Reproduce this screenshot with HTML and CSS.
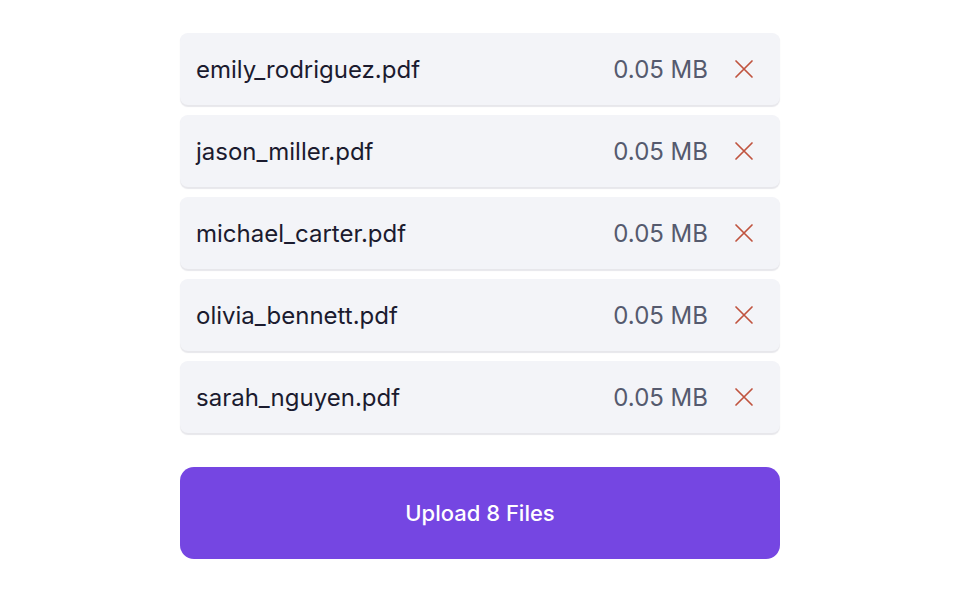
FILE: index.html
```html
<!DOCTYPE html>
<html>
<head>
<meta charset="utf-8">
<link rel="stylesheet" href="styles.css">
</head>
<body>
<main class="uploader">
  <ul class="file-list">
    <li class="file-row"><span class="file-name">emily_rodriguez.pdf</span><span class="file-size">0.05 MB</span><button class="remove" aria-label="Remove"><svg viewBox="0 0 20 20" width="20" height="20"><path d="M2 2L18 18M18 2L2 18" stroke="currentColor" stroke-width="1.7" stroke-linecap="round"/></svg></button></li>
    <li class="file-row"><span class="file-name">jason_miller.pdf</span><span class="file-size">0.05 MB</span><button class="remove" aria-label="Remove"><svg viewBox="0 0 20 20" width="20" height="20"><path d="M2 2L18 18M18 2L2 18" stroke="currentColor" stroke-width="1.7" stroke-linecap="round"/></svg></button></li>
    <li class="file-row"><span class="file-name">michael_carter.pdf</span><span class="file-size">0.05 MB</span><button class="remove" aria-label="Remove"><svg viewBox="0 0 20 20" width="20" height="20"><path d="M2 2L18 18M18 2L2 18" stroke="currentColor" stroke-width="1.7" stroke-linecap="round"/></svg></button></li>
    <li class="file-row"><span class="file-name">olivia_bennett.pdf</span><span class="file-size">0.05 MB</span><button class="remove" aria-label="Remove"><svg viewBox="0 0 20 20" width="20" height="20"><path d="M2 2L18 18M18 2L2 18" stroke="currentColor" stroke-width="1.7" stroke-linecap="round"/></svg></button></li>
    <li class="file-row"><span class="file-name">sarah_nguyen.pdf</span><span class="file-size">0.05 MB</span><button class="remove" aria-label="Remove"><svg viewBox="0 0 20 20" width="20" height="20"><path d="M2 2L18 18M18 2L2 18" stroke="currentColor" stroke-width="1.7" stroke-linecap="round"/></svg></button></li>
  </ul>
  <button class="upload-btn">Upload 8 Files</button>
</main>
</body>
</html>
```
FILE: styles.css
```css
* { box-sizing: border-box; }
html, body { margin: 0; padding: 0; background: #ffffff; }
body {
  font-family: Inter, "Noto Sans", sans-serif;
  color: #1b1b2f;
}
.uploader {
  width: 600px;
  margin: 0 auto;
  padding-top: 33px;
  display: flex;
  flex-direction: column;
}
.file-list {
  list-style: none;
  margin: 0;
  padding: 0;
  display: flex;
  flex-direction: column;
  gap: 10px;
}
.file-row {
  height: 72px;
  display: flex;
  align-items: center;
  padding: 0 26px 0 16px;
  background: #f3f4f8;
  border-radius: 8px;
  box-shadow: 0 1.5px 1px rgba(20, 20, 60, 0.10);
}
.file-name {
  flex: 1;
  font-size: 24px;
  color: #1b1b2f;
}
.file-size {
  font-size: 24px;
  color: #555a6e;
  margin-right: 26px;
}
.remove {
  border: none;
  background: none;
  padding: 0;
  width: 20px;
  height: 20px;
  color: #c0533f;
  display: flex;
  cursor: pointer;
}
.remove svg { display: block; }
.upload-btn {
  margin-top: 34px;
  height: 92px;
  border: none;
  border-radius: 14px;
  background: #7546e2;
  color: #ffffff;
  font-family: Inter, "Noto Sans", sans-serif;
  font-size: 22px;
  font-weight: 500;
  cursor: pointer;
}
```
